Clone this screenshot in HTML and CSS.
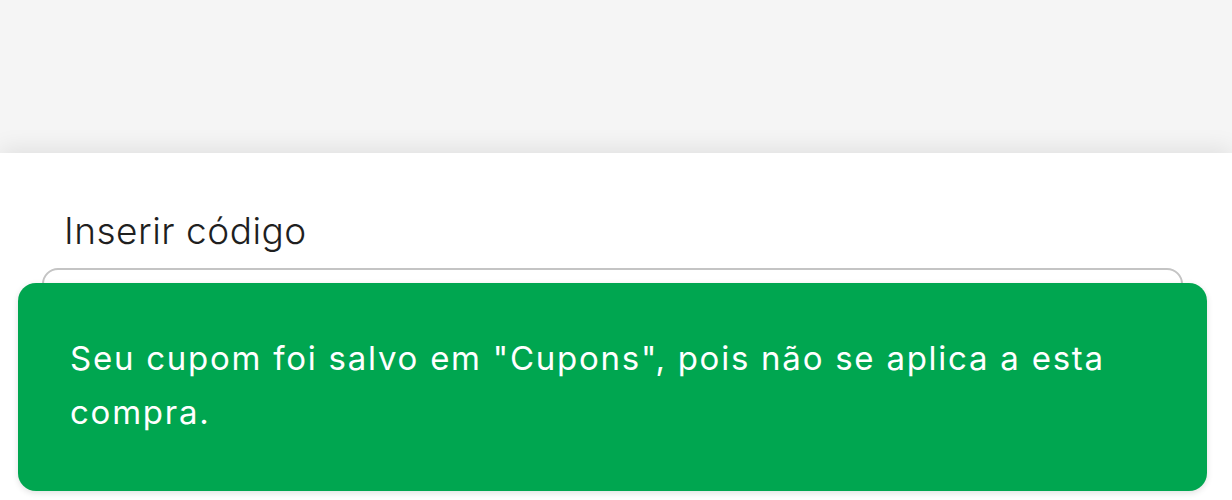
FILE: index.html
```html
<!DOCTYPE html>
<html lang="pt">
<head>
<meta charset="utf-8">
<link rel="stylesheet" href="styles.css">
</head>
<body>
<div class="backdrop"></div>
<div class="sheet">
  <label class="label">Inserir código</label>
  <div class="input"></div>
  <div class="toast">
    <p class="toast-text">Seu cupom foi salvo em "Cupons", pois não se aplica a esta compra.</p>
  </div>
</div>
</body>
</html>
```
FILE: styles.css
```css
html, body {
  margin: 0;
  padding: 0;
  width: 1232px;
  height: 500px;
  overflow: hidden;
  background: #ffffff;
  font-family: Inter, "Open Sans", "Liberation Sans", sans-serif;
}
.backdrop {
  height: 153px;
  background: #f5f5f5;
}
.sheet {
  position: relative;
  height: 347px;
  background: #ffffff;
  box-shadow: 0 -4px 22px rgba(0, 0, 0, 0.09);
  padding: 56px 49px 0 42px;
  box-sizing: border-box;
}
.label {
  display: block;
  margin-left: 22px;
  font-size: 37px;
  font-weight: 300;
  line-height: 44px;
  letter-spacing: 0.5px;
  color: #1f1f1f;
}
.input {
  margin-top: 15px;
  height: 80px;
  border: 2px solid #c4c4c4;
  border-radius: 16px;
}
.toast {
  position: absolute;
  left: 18px;
  top: 130px;
  width: 1189px;
  height: 208px;
  box-sizing: border-box;
  background: #00a650;
  border-radius: 18px;
  padding: 48px 40px 0 52px;
  box-shadow: 0 2px 6px rgba(0, 0, 0, 0.12);
}
.toast-text {
  margin: 0;
  color: #ffffff;
  font-size: 33px;
  line-height: 54px;
  letter-spacing: 1.75px;
}
```
